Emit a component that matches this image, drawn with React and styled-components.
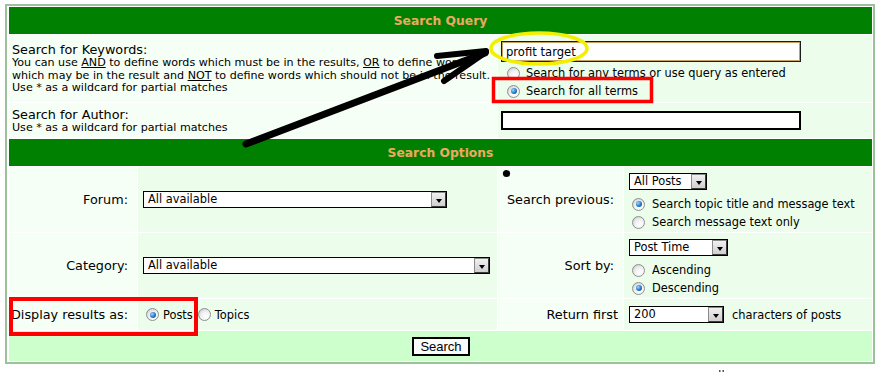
import styled, { createGlobalStyle } from 'styled-components';

const GlobalStyle = createGlobalStyle`
  body {
    margin: 0;
    background: #fff;
    color: #000;
    font-family: "DejaVu Sans", Verdana, sans-serif;
  }
`;

const Page = styled.div`
  position: relative;
  width: 877px;
  height: 372px;
  padding: 4px 0 0 5px;
  box-sizing: border-box;
`;

const Frame = styled.div`
  width: 870px;
  box-sizing: border-box;
  border: 2px solid #9bc29b;
  padding: 1px 1px 1px 2px;
  background: #fff;
  display: flex;
  flex-direction: column;
  gap: 1px;
`;

const Header = styled.div`
  height: ${(p) => p.$h}px;
  background: #008000;
  color: #f0a860;
  font-weight: bold;
  font-size: 12.3px;
  display: flex;
  align-items: center;
  justify-content: center;
`;

const QueryRow = styled.div`
  display: grid;
  grid-template-columns: 488px 1fr;
  gap: 1px;
  height: ${(p) => p.$h}px;
`;

const LabelCell = styled.div`
  background: #f5fff5;
  display: flex;
  flex-direction: column;
  justify-content: center;
  align-items: ${(p) => (p.$right ? 'flex-end' : 'flex-start')};
  padding: ${(p) => (p.$right ? `0 ${p.$pr ?? 9}px 0 0` : '0 0 0 3px')};
  font-size: 12.8px;
`;

const FieldCell = styled.div`
  background: #ecfdec;
  display: flex;
  flex-direction: column;
  justify-content: ${(p) => (p.$pt ? 'flex-start' : 'center')};
  align-items: flex-start;
  padding-left: ${(p) => p.$pl ?? 5}px;
  padding-top: ${(p) => p.$pt ?? 0}px;
  font-size: 11.4px;
`;

const Title = styled.div`
  line-height: 15px;
`;

const Hint = styled.div`
  font-size: 11.1px;
  line-height: 12.5px;
  white-space: nowrap;

  u {
    text-decoration: underline;
  }
`;

const TextBox = styled.input`
  width: ${(p) => p.$w}px;
  height: ${(p) => p.$h}px;
  box-sizing: border-box;
  border: ${(p) => (p.$focus ? '1px solid #1c1c1c' : '2px solid #000')};
  box-shadow: ${(p) => (p.$focus ? 'inset 0 0 0 1px #c8a060' : 'none')};
  margin-bottom: ${(p) => p.$mb ?? 0}px;
  padding: 0 4px;
  font-family: "DejaVu Sans", Verdana, sans-serif;
  font-size: 11.6px;
  color: #000;
  background: #fff;
  outline: none;
`;

const OptionLine = styled.label`
  display: flex;
  align-items: center;
  height: 18px;
  white-space: nowrap;
`;

const RadioDot = styled.span`
  display: inline-flex;
  align-items: center;
  justify-content: center;
  flex: none;
  box-sizing: border-box;
  width: 13px;
  height: 13px;
  border-radius: 50%;
  border: 1px solid #8e9090;
  background: radial-gradient(circle at 65% 70%, #ffffff 0%, #f2f2f2 45%, #c4c4c4 100%);
  margin-left: ${(p) => p.$ml ?? 3}px;
  margin-right: ${(p) => p.$mr ?? 7}px;

  &::after {
    content: '';
    display: ${(p) => (p.$checked ? 'block' : 'none')};
    width: 6px;
    height: 6px;
    border-radius: 50%;
    background: radial-gradient(circle at 35% 35%, #9ad8ff 0%, #2277c8 55%, #0a3f7e 100%);
  }
`;

const SelectBox = styled.span`
  display: inline-flex;
  align-items: stretch;
  box-sizing: border-box;
  width: ${(p) => p.$w}px;
  height: 17px;
  border: 1px solid #000;
  background: #fff;
  font-size: 11.4px;
  margin-bottom: ${(p) => p.$mb ?? 0}px;
`;

const SelectText = styled.span`
  flex: 1;
  padding-left: 4px;
  line-height: 15px;
  white-space: nowrap;
  overflow: hidden;
`;

const SelectArrow = styled.span`
  width: 15px;
  box-sizing: border-box;
  border: 1px solid #8a8a8a;
  border-right-color: #3c3c3c;
  border-bottom-color: #3c3c3c;
  background: linear-gradient(#f0f0f0, #cfcfcf);
  display: flex;
  align-items: center;
  justify-content: center;

  &::after {
    content: '';
    margin-top: 3px;
    border-left: 3.5px solid transparent;
    border-right: 3.5px solid transparent;
    border-top: 4px solid #000;
  }
`;

const OptionsGrid = styled.div`
  display: grid;
  grid-template-columns: 128px 359px 125px 1fr;
  grid-template-rows: 65px 65px 31px;
  gap: 1px;
`;

const Inline = styled.div`
  display: flex;
  align-items: center;
  white-space: nowrap;
`;

const Suffix = styled.span`
  margin-left: 8px;
`;

const ButtonRow = styled.div`
  height: 30px;
  background: #ccffcc;
  display: flex;
  align-items: center;
  justify-content: center;
`;

const SearchButton = styled.button`
  width: 58px;
  height: 19px;
  margin-left: 1px;
  box-sizing: border-box;
  border: 2px solid #000;
  background: #fbfbfb;
  font-family: "Liberation Sans", Arial, sans-serif;
  font-size: 13px;
  padding: 0;
  line-height: 15px;
`;

const Marks = styled.svg`
  position: absolute;
  left: 0;
  top: 0;
  pointer-events: none;
`;

function Select({ w, value, mb }) {
  return (
    <SelectBox $w={w} $mb={mb}>
      <SelectText>{value}</SelectText>
      <SelectArrow />
    </SelectBox>
  );
}

function Option({ checked, children, ml, mr }) {
  return (
    <OptionLine>
      <RadioDot $checked={checked} $ml={ml} $mr={mr} />
      {children}
    </OptionLine>
  );
}

function Annotations() {
  return (
    <Marks width="877" height="372" viewBox="0 0 877 372">
      <ellipse cx="539" cy="48.5" rx="48" ry="15.5" fill="none" stroke="#f2f000" strokeWidth="3.5" />
      <rect x="493.5" y="78.5" width="158" height="23" fill="none" stroke="#ff0000" strokeWidth="3.5" />
      <rect x="11" y="299" width="185" height="35" fill="none" stroke="#ff0000" strokeWidth="4" />
      <g stroke="#000" strokeLinecap="round" fill="none">
        <line x1="246" y1="144" x2="485" y2="53" strokeWidth="7" />
        <line x1="486" y1="51" x2="437" y2="56" strokeWidth="6" />
        <line x1="486" y1="52" x2="444" y2="81" strokeWidth="6" />
      </g>
      <circle cx="506.5" cy="173.5" r="3.6" fill="#000" />
      <rect x="719" y="370" width="1.5" height="2" fill="#556" />
      <rect x="722.5" y="370" width="1.5" height="2" fill="#556" />
    </Marks>
  );
}

export default function App() {
  return (
    <Page>
      <GlobalStyle />
      <Frame>
        <Header $h={27}>Search Query</Header>
        <QueryRow $h={67}>
          <LabelCell>
            <Title>Search for Keywords:</Title>
            <Hint>
              You can use <u>AND</u> to define words which must be in the results, <u>OR</u> to define words
            </Hint>
            <Hint>
              which may be in the result and <u>NOT</u> to define words which should not be in the result.
            </Hint>
            <Hint>Use * as a wildcard for partial matches</Hint>
          </LabelCell>
          <FieldCell $pl={3} $pt={6}>
            <TextBox $w={300} $h={21} $mb={2} $focus defaultValue="profit target" />
            <Option ml={6} mr={6}>Search for any terms or use query as entered</Option>
            <Option checked ml={6} mr={6}>Search for all terms</Option>
          </FieldCell>
        </QueryRow>
        <QueryRow $h={35}>
          <LabelCell>
            <Title>Search for Author:</Title>
            <Hint>Use * as a wildcard for partial matches</Hint>
          </LabelCell>
          <FieldCell $pl={3}>
            <TextBox $w={300} $h={19} />
          </FieldCell>
        </QueryRow>
        <Header $h={27}>Search Options</Header>
        <OptionsGrid>
          <LabelCell $right>Forum:</LabelCell>
          <FieldCell>
            <Select w={304} value="All available" />
          </FieldCell>
          <LabelCell $right>Search previous:</LabelCell>
          <FieldCell $pt={6}>
            <Select w={78} value="All Posts" mb={5} />
            <Option checked ml={3} mr={7}>Search topic title and message text</Option>
            <Option ml={3} mr={7}>Search message text only</Option>
          </FieldCell>

          <LabelCell $right>Category:</LabelCell>
          <FieldCell>
            <Select w={347} value="All available" />
          </FieldCell>
          <LabelCell $right>Sort by:</LabelCell>
          <FieldCell $pt={6}>
            <Select w={99} value="Post Time" mb={5} />
            <Option ml={3} mr={7}>Ascending</Option>
            <Option checked ml={3} mr={7}>Descending</Option>
          </FieldCell>

          <LabelCell $right>Display results as:</LabelCell>
          <FieldCell>
            <Inline>
              <Option checked ml={3} mr={4}>Posts</Option>
              <Option ml={5} mr={4}>Topics</Option>
            </Inline>
          </FieldCell>
          <LabelCell $right $pr={5}>Return first</LabelCell>
          <FieldCell>
            <Inline>
              <Select w={95} value="200" />
              <Suffix>characters of posts</Suffix>
            </Inline>
          </FieldCell>
        </OptionsGrid>
        <ButtonRow>
          <SearchButton>Search</SearchButton>
        </ButtonRow>
      </Frame>
      <Annotations />
    </Page>
  );
}
